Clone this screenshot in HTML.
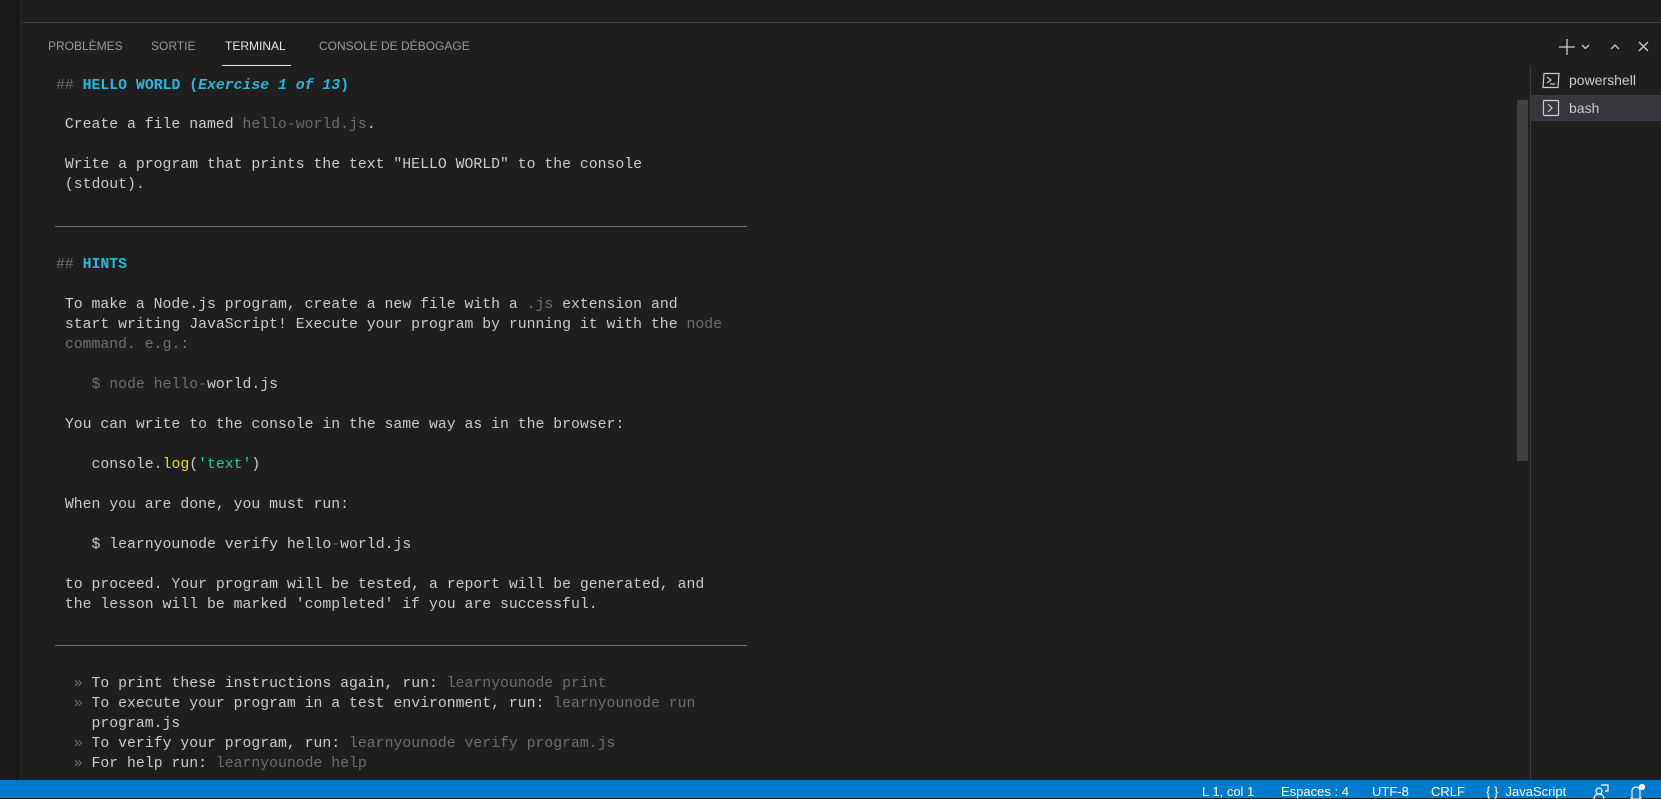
<!DOCTYPE html>
<html><head><meta charset="utf-8"><style>
*{margin:0;padding:0;box-sizing:border-box}
body{width:1661px;height:798px;background:#1e1e1e;overflow:hidden;position:relative;font-family:"Liberation Sans",sans-serif}
.left{position:absolute;left:0;top:0;width:21px;height:780px;background:#181818;border-right:1px solid #2b2b2b}
.topbar{position:absolute;left:21px;top:0;right:0;height:23px;background:#1e1e1e;border-bottom:1px solid #3a3a3a}
.tab{position:absolute;top:39px;font-size:12px;color:#9a9a9a;letter-spacing:0}
.tab.a{color:#e7e7e7}
.ul{position:absolute;left:222px;top:65px;width:69px;height:1px;background:#e7e7e7}
.t{position:absolute;font-family:"Liberation Mono",monospace;font-size:14.8px;color:#cccccc;white-space:pre;line-height:20px}
.g{color:#6e6e6e}.c{color:#29b8db;font-weight:bold}.i{font-style:italic}
.y{color:#e5e510}.gr{color:#23d18b}
.hr{position:absolute;left:55px;width:692px;height:1px;background:#6e6e6e}
.side{position:absolute;left:1530px;top:66px;width:1px;height:714px;background:#3a3a3a}
.sb{position:absolute;left:1517px;top:100px;width:11px;height:361px;background:#424242}
.row{position:absolute;left:1531px;width:130px;height:26px;font-size:14px;color:#cccccc;line-height:26px;padding-left:38px}
.row.sel{background:#37373d}
.status{position:absolute;left:0;top:780px;width:1661px;height:18px;background:#007acc;color:#fff;font-size:13px}
.status span{position:absolute;top:4px}
</style></head><body>
<div class="left"></div>
<div class="topbar"></div>
<div class="tab" style="left:48px">PROBLÈMES</div>
<div class="tab" style="left:151px">SORTIE</div>
<div class="tab a" style="left:225px">TERMINAL</div>
<div class="tab" style="left:319px">CONSOLE DE DÉBOGAGE</div>
<div class="ul"></div>
<svg style="position:absolute;left:1557px;top:38px" width="100" height="18" viewBox="0 0 100 18" fill="none" stroke="#cccccc" stroke-width="1.3">
<path d="M10 1v16M2 9h16"/><path d="M25 7l3.5 3.5L32 7"/><path d="M54 11l4-4 4 4"/><path d="M82 4l9 9M91 4l-9 9"/></svg>

<div class="t" style="left:56px;top:76px"><span class="g">##</span> <span class="c">HELLO WORLD (<span class="i">Exercise 1 of 13</span>)</span></div>
<div class="t" style="left:56px;top:115px"> Create a file named <span class="g">hello-world.js</span>.

 Write a program that prints the text "HELLO WORLD" to the console
 (stdout).</div>
<div class="hr" style="top:226px"></div>
<div class="t" style="left:56px;top:255px"><span class="g">##</span> <span class="c">HINTS</span></div>
<div class="t" style="left:56px;top:295px"> To make a Node.js program, create a new file with a <span class="g">.js</span> extension and
 start writing JavaScript! Execute your program by running it with the <span class="g">node</span>
 <span class="g">command. e.g.:</span>

    <span class="g">$ node hello-</span>world.js

 You can write to the console in the same way as in the browser:

    console.<span class="y">log</span>(<span class="gr">'text'</span>)

 When you are done, you must run:

    $ learnyounode verify hello<span class="g">-</span>world.js

 to proceed. Your program will be tested, a report will be generated, and
 the lesson will be marked 'completed' if you are successful.</div>
<div class="hr" style="top:645px"></div>
<div class="t" style="left:56px;top:674px">  <span class="g">»</span> To print these instructions again, run: <span class="g">learnyounode print</span>
  <span class="g">»</span> To execute your program in a test environment, run: <span class="g">learnyounode run</span>
    program.js
  <span class="g">»</span> To verify your program, run: <span class="g">learnyounode verify program.js</span>
  <span class="g">»</span> For help run: <span class="g">learnyounode help</span></div>

<div class="sb"></div>
<div class="side"></div>
<div class="row" style="top:67px">powershell</div>
<div class="row sel" style="top:95px">bash</div>
<svg style="position:absolute;left:1542px;top:72px" width="18" height="46" viewBox="0 0 18 46" fill="none" stroke="#cccccc" stroke-width="1.2">
<path d="M2 1.5h15l-1 14H1z"/><path d="M5 5l4 3-4 3M8 12h5"/>
<rect x="1.5" y="28.5" width="15" height="15" rx="1"/><path d="M6 32l4 4-4 4"/></svg>

<div class="status">
<span style="left:1202px">L 1, col 1</span>
<span style="left:1281px">Espaces : 4</span>
<span style="left:1372px">UTF-8</span>
<span style="left:1431px">CRLF</span>
<span style="left:1486px">{ }&nbsp; JavaScript</span>
<svg style="position:absolute;left:1593px;top:4px" width="60" height="15" viewBox="0 0 60 15" fill="none" stroke="#fff" stroke-width="1.2">
<circle cx="6" cy="7" r="3"/><path d="M1 15c0-3 2-5 5-5s5 2 5 5M8 1h7v6h-3"/>
<path d="M39 15V7a4 4 0 018 0v8zM37 15h12"/><circle cx="49" cy="3" r="2.5" fill="#fff"/></svg>
</div>
</body></html>
